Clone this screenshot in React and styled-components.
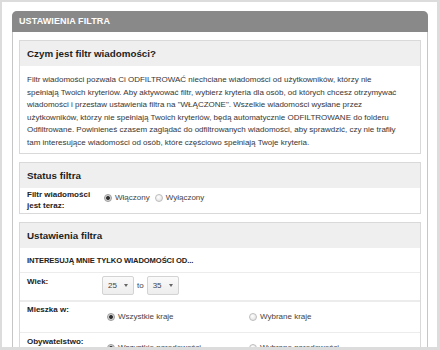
import React from "react";
import styled, { createGlobalStyle } from "styled-components";

const GlobalStyle = createGlobalStyle`
  html, body {
    margin: 0;
    padding: 0;
    background: #dcdcdc;
    overflow: hidden;
  }
  body {
    font-family: "Liberation Sans", Arial, sans-serif;
    color: #333;
  }
  * { box-sizing: border-box; }
`;

const Frame = styled.div`
  margin: 2px 3px 0 2px;
  height: 345px;
  background: #fff;
  overflow: hidden;
  padding: 9px 9px 0 10px;
`;

const Panel = styled.section`
  border: 1px solid #c6c6c6;
  border-top: none;
  border-radius: 5px 5px 0 0;
`;

const PanelHeader = styled.h1`
  margin: 0 -1px;
  height: 21px;
  line-height: 21px;
  padding-left: 7px;
  background: #898989;
  border-radius: 5px 5px 0 0;
  color: #fff;
  font-size: 9px;
  font-weight: bold;
  letter-spacing: 0.1px;
`;

const PanelBody = styled.div`
  padding: 8px 6px 0 6px;
  display: flex;
  flex-direction: column;
  gap: 8px;
`;

const Section = styled.div`
  border: 1px solid #d9d9d9;
  background: #fff;
`;

const SectionHeader = styled.h2`
  margin: 0;
  height: 25px;
  line-height: 25px;
  padding-left: 7px;
  background: #efefef;
  color: #1e1e1e;
  font-size: 9.8px;
  font-weight: bold;
`;

const Paragraph = styled.p`
  margin: 0;
  padding: 8px 7px 4px 7px;
  font-size: 8px;
  line-height: 12.5px;
  color: #363636;
  white-space: pre-line;
`;

const Row = styled.div`
  display: grid;
  grid-template-columns: 75px 1fr;
  align-items: start;
  padding: ${(p) => p.$pad || "3px 7px 5px 7px"};
  border-bottom: ${(p) => (p.$last ? "none" : `${p.$thick ? 2 : 1}px solid #ececec`)};
`;

const Label = styled.div`
  font-size: 8px;
  font-weight: bold;
  line-height: 11px;
  color: #222;
`;

const Caption = styled.div`
  padding: 0 7px;
  height: 25px;
  line-height: 25px;
  font-size: 7.6px;
  font-weight: bold;
  color: #222;
  text-transform: uppercase;
  border-bottom: 1px solid #ececec;
  letter-spacing: -0.1px;
`;

const Options = styled.div`
  display: ${(p) => (p.$columns ? "grid" : "flex")};
  grid-template-columns: 137px 137px;
  gap: 5px;
  margin-top: ${(p) => p.$offset || 0}px;
  padding-left: ${(p) => p.$inset || 0}px;
`;

const Option = styled.label`
  display: flex;
  align-items: center;
  gap: 3px;
  font-size: 8px;
  line-height: 11px;
  color: #444;
`;

const Dot = styled.span`
  width: 8px;
  height: 8px;
  border-radius: 50%;
  border: 1px solid ${(p) => (p.$on ? "#9a9a9a" : "#bdbdbd")};
  background: ${(p) =>
    p.$on
      ? "radial-gradient(circle, #2f2f2f 0 1.5px, #cfcfcf 2.3px, #ececec 4px)"
      : "radial-gradient(circle at 40% 35%, #ffffff 0, #e4e4e4 4px)"};
  flex: none;
`;

const Range = styled.div`
  display: flex;
  align-items: center;
  gap: 3px;
  font-size: 8px;
  color: #444;
`;

const Select = styled.div`
  width: 32px;
  height: 19px;
  display: flex;
  align-items: center;
  justify-content: space-between;
  padding: 0 5px 0 5px;
  border: 1px solid #d3d3d3;
  border-radius: 2px;
  background: linear-gradient(#fafafa, #ededed);
  font-size: 8px;
  color: #444;
`;

const Arrow = styled.span`
  width: 0;
  height: 0;
  border-left: 2.5px solid transparent;
  border-right: 2.5px solid transparent;
  border-top: 3px solid #666;
`;

const Radio = ({ on, children }) => (
  <Option>
    <Dot $on={on} />
    {children}
  </Option>
);

const text = `Filtr wiadomości pozwala Ci ODFILTROWAĆ niechciane wiadomości od użytkowników, którzy nie
spełniają Twoich kryteriów. Aby aktywować filtr, wybierz kryteria dla osób, od których chcesz otrzymywać
wiadomości i przestaw ustawienia filtra na "WŁĄCZONE". Wszelkie wiadomości wysłane przez
użytkowników, którzy nie spełniają Twoich kryteriów, będą automatycznie ODFILTROWANE do folderu
Odfiltrowane. Powinieneś czasem zaglądać do odfiltrowanych wiadomości, aby sprawdzić, czy nie trafiły
tam interesujące wiadomości od osób, które częściowo spełniają Twoje kryteria.`;

export default function App() {
  return (
    <>
      <GlobalStyle />
      <Frame>
        <Panel>
          <PanelHeader>USTAWIENIA FILTRA</PanelHeader>
          <PanelBody>
            <Section>
              <SectionHeader>Czym jest filtr wiadomości?</SectionHeader>
              <Paragraph>{text}</Paragraph>
            </Section>

            <Section>
              <SectionHeader>Status filtra</SectionHeader>
              <Row $pad="1px 7px 2px 7px" $last>
                <Label>
                  Filtr wiadomości
                  <br />
                  jest teraz:
                </Label>
                <Options $offset={3} $inset={2}>
                  <Radio on>Włączony</Radio>
                  <Radio>Wyłączony</Radio>
                </Options>
              </Row>
            </Section>

            <Section>
              <SectionHeader>Ustawienia filtra</SectionHeader>
              <Caption>Interesują mnie tylko wiadomości od...</Caption>
              <Row $pad="3px 7px 5px 7px" $thick>
                <Label>Wiek:</Label>
                <Range>
                  <Select>
                    25 <Arrow />
                  </Select>
                  to
                  <Select>
                    35 <Arrow />
                  </Select>
                </Range>
              </Row>
              <Row $pad="2px 7px 10px 7px">
                <Label>Mieszka w:</Label>
                <Options $columns $offset={7} $inset={5}>
                  <Radio on>Wszystkie kraje</Radio>
                  <Radio>Wybrane kraje</Radio>
                </Options>
              </Row>
              <Row $pad="3px 7px 10px 7px" $last>
                <Label>Obywatelstwo:</Label>
                <Options $columns $offset={6} $inset={5}>
                  <Radio on>Wszystkie narodowości</Radio>
                  <Radio>Wybrane narodowości</Radio>
                </Options>
              </Row>
            </Section>
          </PanelBody>
        </Panel>
      </Frame>
    </>
  );
}
